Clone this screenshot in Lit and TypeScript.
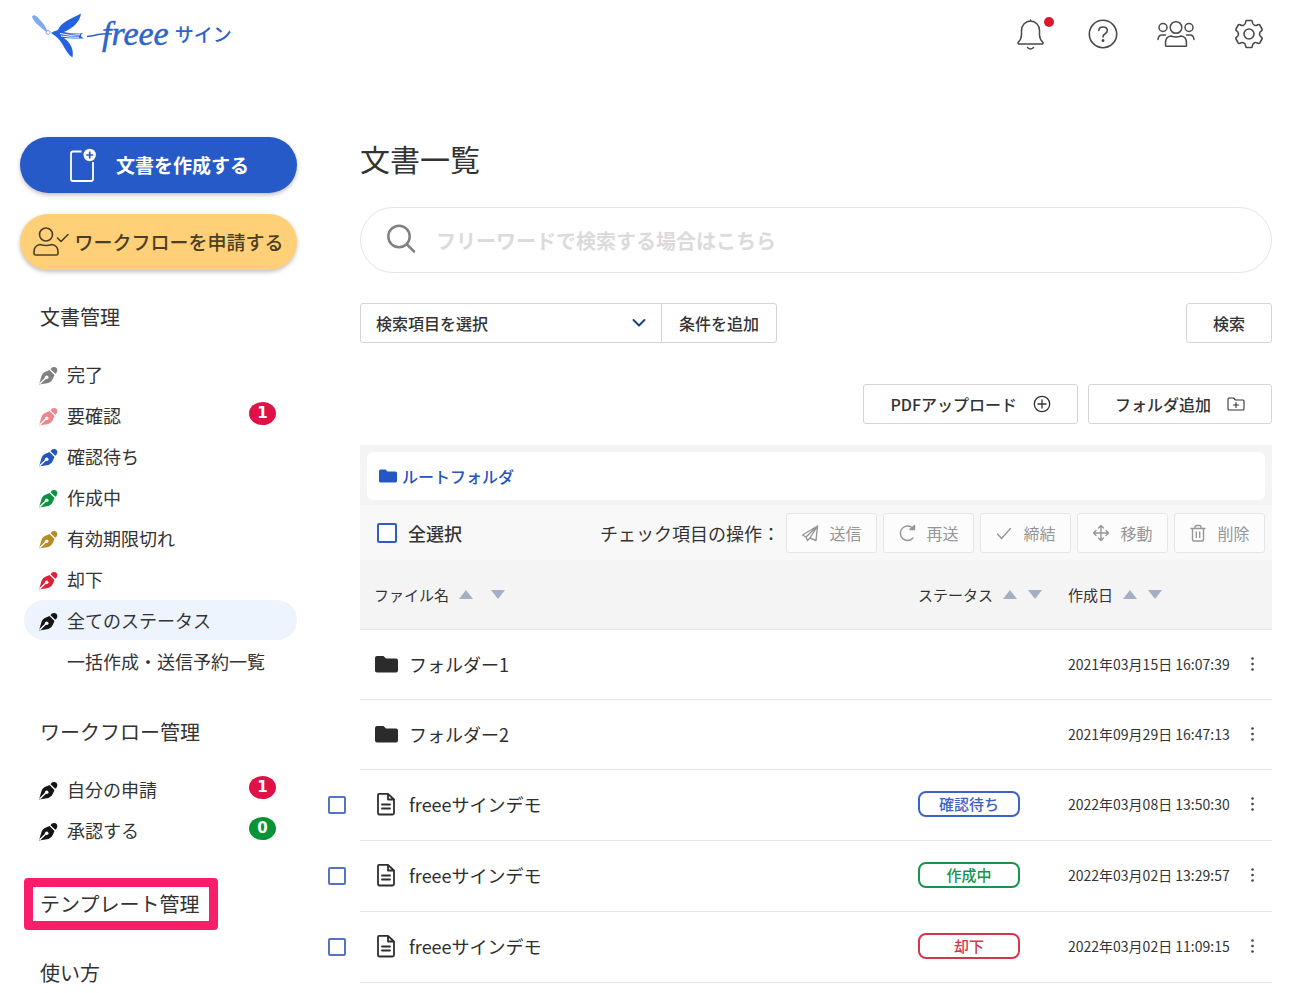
import { LitElement, html, css, svg, nothing } from "lit";
import { customElement, property } from "lit/decorators.js";
import { classMap } from "lit/directives/class-map.js";

type Badge = { count: number; tone: "alert" | "ok" };
type NavItem = { label: string; tone?: string; badge?: Badge; current?: boolean };
type Row = { kind: "folder" | "doc"; name: string; status?: string; tone?: string; date: string };

const STATUS_ITEMS: NavItem[] = [
  { label: "完了", tone: "gray" },
  { label: "要確認", tone: "pink", badge: { count: 1, tone: "alert" } },
  { label: "確認待ち", tone: "blue" },
  { label: "作成中", tone: "green" },
  { label: "有効期限切れ", tone: "gold" },
  { label: "却下", tone: "red" },
  { label: "全てのステータス", tone: "black", current: true },
  { label: "一括作成・送信予約一覧" },
];

const WORKFLOW_ITEMS: NavItem[] = [
  { label: "自分の申請", tone: "black", badge: { count: 1, tone: "alert" } },
  { label: "承認する", tone: "black", badge: { count: 0, tone: "ok" } },
];

const ROWS: Row[] = [
  { kind: "folder", name: "フォルダー1", date: "2021年03月15日 16:07:39" },
  { kind: "folder", name: "フォルダー2", date: "2021年09月29日 16:47:13" },
  { kind: "doc", name: "freeeサインデモ", status: "確認待ち", tone: "blue", date: "2022年03月08日 13:50:30" },
  { kind: "doc", name: "freeeサインデモ", status: "作成中", tone: "green", date: "2022年03月02日 13:29:57" },
  { kind: "doc", name: "freeeサインデモ", status: "却下", tone: "red", date: "2022年03月02日 11:09:15" },
];

const shared = css`
  * { box-sizing: border-box; }
  button, input, select {
    font: inherit;
    color: inherit;
    margin: 0;
  }
  button { cursor: pointer; }
  a { color: inherit; text-decoration: none; }
  svg { display: block; flex: none; }
  ul { list-style: none; margin: 0; padding: 0; }
  h1, h2 { margin: 0; font-weight: 400; }
  .line { fill: none; stroke: currentColor; stroke-linecap: round; stroke-linejoin: round; }
`;

const bell = svg`<path d="M4.500 26 Q2.500 26 3 24.500 C5 22.500 6.500 20.500 6.500 17 V12.500 A9 9.500 0 0 1 24.500 12.500 V17 C24.500 20.500 26 22.500 28 24.500 Q28.500 26 26.500 26 Z M12.500 29.500 Q15.500 32.500 18.500 29.500"/><path d="M15.500 3 V2"/>`;
const actions = [
  { label: "送信", icon: svg`<path d="M16.500 2 1.500 11 5 13 Z M16.500 2 15 16.500 9 14 6.500 16.500 5 13 M16.500 2 9 14"/>` },
  { label: "再送", icon: svg`<path d="M14.500 4 A7.200 7.200 0 1 0 15 14"/><path d="M12 5.500 H16.500 V1.500 Z" fill="currentColor"/>` },
  { label: "締結", icon: svg`<path d="M2.500 10 6.500 14.500 15.500 4.500"/>` },
  { label: "移動", icon: svg`<path d="M9 1.500V16.500M1.500 9H16.500M6.500 4 9 1.500 11.500 4M6.500 14 9 16.500 11.500 14M4 6.500 1.500 9 4 11.500M14 6.500 16.500 9 14 11.500"/>` },
  { label: "削除", icon: svg`<path d="M2 4.500H16M6 4.500 V3 Q6 1.500 7.500 1.500 H10.500 Q12 1.500 12 3 V4.500M3.500 4.500V15.500Q3.500 17 5 17H13Q14.500 17 14.500 15.500V4.500M7.300 8V13.500M10.700 8V13.500"/>` },
];

@customElement("app-header")
class AppHeader extends LitElement {
  static styles = [shared, css`
    :host {
      display: flex;
      justify-content: space-between;
      align-items: center;
      height: 68px;
      padding: 0 30px;
      color: #4a4a4a;
    }
    .logo { display: flex; align-items: center; color: #2f63cc; }
    .bird { margin-right: -12px; }
    .word { font: italic 34px/44px "Liberation Serif", serif; -webkit-text-stroke: 0.5px currentColor; }
    .sub { font-size: 19px; font-weight: 500; line-height: 28px; margin-left: 6px; }
    nav { display: flex; gap: 33px; }
    .tool {
      position: relative;
      width: 40px;
      height: 40px;
      padding: 0;
      border: 0;
      background: none;
      display: grid;
      place-items: center;
    }
    .dot {
      position: absolute;
      top: 3px;
      right: -4px;
      width: 10px;
      height: 10px;
      border-radius: 50%;
      background: #d9182d;
    }
  `];

  render() {
    return html`
      <a class="logo" href="#" aria-label="freee サイン">
        <svg class="bird" width="84" height="52" viewBox="30 8 84 52">
          <path d="M32 16.500 Q34 14 37.500 17 L44 24.500 L47.500 31 L45.500 31.500 L38 25 Q32.500 20 32 16.500 Z" fill="#7fa9f2" />
          <circle cx="48" cy="32.500" r="2" fill="none" stroke="#7fa9f2" />
          <path d="M51 33 Q54 31 58 30 C61 22 71 19 81 13.500 C80 22 73 28 64 32 Q74 34.500 83.500 33 Q78 35.500 84 38.500 Q73 38.500 64 38 C71 43 74 50 72.500 57.500 C65 53 64 42 54 35 Z" fill="#2463e0" />
          <path d="M60 33.500 Q70 36.500 80 34.700 M61 36 Q70 37.500 79 37.200" stroke="#fff" stroke-width="1" fill="none" />
          <path d="M87 36.500 Q93 36 98 34.500 Q104 33.500 112 34" stroke="currentColor" stroke-width="1.500" fill="none" />
        </svg>
        <span class="word">freee</span>
        <span class="sub">サイン</span>
      </a>
      <nav aria-label="ツール">
        <button class="tool" aria-label="通知">
          <svg class="line" width="31" height="32" viewBox="0 0 31 32" stroke-width="1.500">${bell}</svg>
          <span class="dot"></span>
        </button>
        <button class="tool" aria-label="ヘルプ">
          <svg class="line" width="32" height="32" viewBox="0 0 32 32" stroke-width="1.600">
            <circle cx="16" cy="16" r="13.700" />
            <path d="M11.800 12.500 Q12 9 16 9 Q20.300 9 20.300 12.500 Q20.300 14.800 17.800 16 Q16 17 16 19" />
            <circle cx="16" cy="22.500" r=".7" fill="currentColor" />
          </svg>
        </button>
        <button class="tool" aria-label="メンバー">
          <svg class="line" width="38" height="32" viewBox="0 0 38 32" stroke-width="1.500">
            <circle cx="19" cy="9.500" r="5.800" /><circle cx="6" cy="9.500" r="4" /><circle cx="32" cy="9.500" r="4" />
            <path d="M8.500 27.500 V25 Q8.500 18.500 14 18 Q19 20 24 18 Q29.500 18.500 29.500 25 V27.500 Q29.500 28.300 28.500 28.300 H9.500 Q8.500 28.300 8.500 27.500 Z M1 21.500 Q1.500 17 5 17 H8.500 M37 21.500 Q36.500 17 33 17 H29.500" />
          </svg>
        </button>
        <button class="tool" aria-label="設定">
          <svg class="line" width="32" height="32" viewBox="0 0 32 32" stroke-width="1.600">
            <circle cx="16" cy="16" r="5" />
            <path d="M13.500 2.500 H18.500 Q19.300 2.500 19.300 4 Q19.500 6.500 21.500 7.300 Q23 7.800 25 6.700 Q26.300 6.200 27 7.300 L29 11 Q29.500 12 28.500 12.800 Q26.500 14 26.500 16 Q26.500 18 28.500 19.200 Q29.500 20 29 21 L27 24.700 Q26.300 25.800 25 25.300 Q23 24.200 21.500 24.700 Q19.500 25.500 19.300 28 Q19.300 29.500 18.500 29.500 H13.500 Q12.700 29.500 12.700 28 Q12.500 25.500 10.500 24.700 Q9 24.200 7 25.300 Q5.700 25.800 5 24.700 L3 21 Q2.500 20 3.500 19.200 Q5.500 18 5.500 16 Q5.500 14 3.500 12.800 Q2.500 12 3 11 L5 7.300 Q5.700 6.200 7 6.700 Q9 7.800 10.500 7.300 Q12.500 6.500 12.700 4 Q12.700 2.500 13.500 2.500 Z" />
          </svg>
        </button>
      </nav>
    `;
  }
}

@customElement("app-sidebar")
class AppSidebar extends LitElement {
  static styles = [shared, css`
    :host { display: block; }
    .cta {
      display: flex;
      align-items: center;
      width: 100%;
      height: 56px;
      border: 0;
      border-radius: 28px;
      font-size: 19px;
      line-height: 28px;
      white-space: nowrap;
      box-shadow: 0 2px 4px rgba(0, 0, 0, 0.25);
    }
    .create { justify-content: center; gap: 20px; padding: 0 4px; background: #265ac8; color: #fff; font-weight: 700; }
    .apply { justify-content: center; gap: 5px; padding: 0; margin-top: 21px; background: #ffd078; color: #4a3f26; font-weight: 500; }
    section { margin-top: 32px; }
    section + section { margin-top: 36px; }
    h2 { font-size: 20px; line-height: 30px; padding-left: 20px; }
    ul { display: grid; gap: 1px; margin-top: 22px; padding-left: 4px; }
    .item {
      display: flex;
      align-items: center;
      height: 40px;
      padding: 0 21px 0 14px;
      border-radius: 20px;
      font-size: 18px;
      line-height: 26px;
      white-space: nowrap;
    }
    .current { background: #edf4fe; }
    .pen { width: 20px; margin-right: 9px; padding-top: 4px; }
    .label { flex: 1; }
    .badge {
      width: 27px;
      height: 23px;
      margin-bottom: 4px;
      border-radius: 50%;
      color: #fff;
      font: 700 15px/23px "DejaVu Sans", sans-serif;
      text-align: center;
    }
    .alert { background: #df1247; }
    .ok { background: #0a9236; }
    .gray { color: #808080; }
    .pink { color: #f0858b; }
    .blue { color: #2655bd; }
    .green { color: #0b9440; }
    .gold { color: #b78b25; }
    .red { color: #dc2138; }
    .black { color: #151515; }
    .links { display: grid; justify-items: start; gap: 28px; margin-top: 28px; font-size: 20px; line-height: 30px; }
    .link { padding-left: 20px; }
    .marked { margin-left: 4px; padding: 2px 10px 2px 7px; border: 9px solid #f91d6a; border-radius: 4px; }
  `];

  private item(it: NavItem) {
    return html`<li>
      <a href="#" class=${classMap({ item: true, current: !!it.current })} aria-current=${it.current ? "page" : nothing}>
        <span class="pen ${it.tone ?? ""}">
          ${it.tone
            ? html`<svg width="20" height="20" viewBox="0 0 20 20">
                <path fill="currentColor" d="M1 18.500 L3.500 10 Q4.500 6.500 8 5.500 L11.500 4 L16.500 9 L15 12.500 Q14 15.500 10.500 17 Z" />
                <path fill="currentColor" d="M12.500 3.300 Q13.500 1 16 1 Q19.500 1.200 19.300 4.500 Q19 6.800 17.300 7.800 Z" />
                <path d="M1.500 18 L8 11.700" stroke="#fff" stroke-width="1.400" />
                <circle cx="8.700" cy="11.200" r="1.800" fill="#fff" />
              </svg>`
            : nothing}
        </span>
        <span class="label">${it.label}</span>
        ${it.badge ? html`<span class="badge ${it.badge.tone}">${it.badge.count}</span>` : nothing}
      </a>
    </li>`;
  }

  render() {
    return html`
      <button class="cta create">
        <svg width="28" height="36" viewBox="0 0 28 36">
          <path d="M13.500 4.500 H5 Q3 4.500 3 6.500 V32 Q3 34 5 34 H23 Q25 34 25 32 V15" fill="none" stroke="#fff" stroke-width="1.800" />
          <circle cx="21.700" cy="8" r="6.200" fill="#fff" />
          <path d="M21.700 4.500 V11.500 M18.200 8 H25.200" stroke="#265ac8" stroke-width="1.700" />
        </svg>
        文書を作成する
      </button>
      <button class="cta apply">
        <svg class="line" width="36" height="32" viewBox="0 0 36 32" stroke-width="1.600">
          <circle cx="13" cy="8.500" r="6.500" />
          <path d="M1 27.500 V26 Q1 19.500 7 18.500 Q13 20.500 19 18.500 Q25 19.500 25 26 V27.500 Q25 29 23.500 29 H2.500 Q1 29 1 27.500 Z M24.500 12 L28 15.500 L35 8.500" />
        </svg>
        ワークフローを申請する
      </button>
      <section>
        <h2>文書管理</h2>
        <ul>${STATUS_ITEMS.map((i) => this.item(i))}</ul>
      </section>
      <section>
        <h2>ワークフロー管理</h2>
        <ul>${WORKFLOW_ITEMS.map((i) => this.item(i))}</ul>
      </section>
      <div class="links">
        <a class="marked" href="#">テンプレート管理</a>
        <a class="link" href="#">使い方</a>
      </div>
    `;
  }
}

@customElement("sort-label")
class SortLabel extends LitElement {
  @property() label = "";
  static styles = [shared, css`
    :host { display: flex; align-items: center; gap: 10px; white-space: nowrap; }
    .arrows { display: flex; gap: var(--arrow-gap, 11px); }
    button { display: block; padding: 0; border: 0; background: none; color: #a3afc2; }
  `];
  render() {
    return html`<span>${this.label}</span>
      <span class="arrows">
        <button aria-label="${this.label} 昇順"><svg width="14" height="12" viewBox="0 0 14 12"><path d="M0 10 L7 1 L14 10Z" fill="currentColor" /></svg></button>
        <button aria-label="${this.label} 降順"><svg width="14" height="12" viewBox="0 0 14 12"><path d="M0 1 L7 10 L14 1Z" fill="currentColor" /></svg></button>
      </span>`;
  }
}

@customElement("document-list")
class DocumentList extends LitElement {
  static styles = [shared, css`
    :host { display: block; }
    h1 { font-size: 30px; line-height: 42px; }
    .search {
      display: flex;
      align-items: center;
      gap: 20px;
      height: 66px;
      margin-top: 28px;
      padding: 0 25px;
      border: 1px solid #e4e4e4;
      border-radius: 33px;
      color: #808080;
    }
    .search svg { margin-bottom: 2px; }
    .search input {
      flex: 1;
      min-width: 0;
      height: 48px;
      padding: 0;
      border: 0;
      outline: 0;
      background: none;
      font-size: 20px;
      font-weight: 700;
    }
    .search input::placeholder { color: #dcdada; opacity: 1; }
    .btn {
      display: flex;
      align-items: center;
      justify-content: center;
      height: 40px;
      padding: 0 26px;
      border: 1px solid #d4d4d4;
      border-radius: 3px;
      background: #fff;
      font-size: 16px;
      line-height: 24px;
      font-weight: 500;
      white-space: nowrap;
    }
    .filter { display: flex; margin-top: 30px; }
    .pick { display: grid; align-items: center; width: 302px; }
    .pick > * { grid-area: 1 / 1; }
    .pick select {
      appearance: none;
      width: 100%;
      height: 40px;
      padding: 0 40px 0 15px;
      border: 1px solid #d4d4d4;
      border-radius: 3px 0 0 3px;
      background: #fff;
      font-size: 16px;
      font-weight: 500;
    }
    .pick svg { justify-self: end; margin-right: 16px; color: #17447e; pointer-events: none; }
    .add { padding: 0 17px; margin-left: -1px; border-radius: 0 3px 3px 0; }
    .run { margin-left: auto; }
    .actions { display: flex; justify-content: flex-end; gap: 10px; margin-top: 41px; }
    .actions .btn { gap: 16px; }
    .panel { margin-top: 21px; padding-top: 7px; background: #f5f4f5; }
    .crumb {
      display: flex;
      align-items: center;
      height: 48px;
      margin: 0 7px 5px;
      padding: 0 12px;
      border-radius: 6px;
      background: #fff;
      color: #2655bd;
      font-size: 16px;
      line-height: 24px;
      font-weight: 500;
    }
    .crumb a { display: flex; align-items: center; gap: 5px; }
    .bulk {
      display: flex;
      align-items: center;
      gap: 6px;
      padding: 8px 7px 7px 17px;
      background: #f8f8f8;
      font-size: 18px;
      line-height: 26px;
      white-space: nowrap;
    }
    .all { display: flex; align-items: center; gap: 11px; margin-right: auto; font-weight: 500; }
    .bulk .btn {
      gap: 10px;
      width: 91px;
      padding: 0;
      border-color: #e6e6e6;
      background: #fcfcfc;
      color: #969696;
      font-weight: 400;
    }
    .box {
      appearance: none;
      display: block;
      width: 18px;
      height: 18px;
      border: 2px solid #5474c0;
      border-radius: 2px;
      background: #fff;
    }
    .all .box { width: 20px; height: 20px; border-color: #2f5cc0; }
    .box:checked { background: #2655bd; }
    table {
      width: calc(100% + 32px);
      margin-left: -32px;
      border-collapse: separate;
      border-spacing: 0;
      table-layout: fixed;
    }
    th, td { padding: 0; text-align: left; font-weight: 400; border-bottom: 1px solid #e6e6e6; }
    th { height: 70px; background: #f5f4f5; font-size: 15px; line-height: 22px; }
    th:first-child, td:first-child { background: none; border: 0; }
    .c-check { width: 32px; }
    .c-status { width: 150px; }
    .c-date { width: 172px; }
    .c-menu { width: 32px; }
    .wide { --arrow-gap: 18px; padding-left: 14px; }
    td { padding-bottom: 2px; font-size: 14px; line-height: 20px; white-space: nowrap; }
    .folder td { height: 70px; }
    .doc td { height: 71px; }
    .name { display: flex; align-items: center; gap: 10px; padding-left: 14px; font-size: 18px; line-height: 26px; color: #2e2e2e; }
    .tag {
      display: block;
      width: 102px;
      height: 26px;
      border: 2px solid currentColor;
      border-radius: 8px;
      font-size: 15px;
      line-height: 22px;
      font-weight: 500;
      text-align: center;
    }
    .blue { color: #3c62c8; }
    .green { color: #16964a; }
    .red { color: #d5364a; }
    .more { display: block; width: 24px; height: 24px; padding: 0; border: 0; background: none; }
  `];

  private icon(kind: string) {
    return kind === "folder"
      ? html`<svg width="25" height="20" viewBox="0 0 25 20"><path fill="#2b2b2b" d="M1 4 Q1 2 3 2 H9.500 L12 4.500 H22 Q24 4.500 24 6.500 V16.500 Q24 18.500 22 18.500 H3 Q1 18.500 1 16.500Z" /></svg>`
      : html`<svg class="line" width="25" height="24" viewBox="0 0 25 24" stroke-width="1.800">
          <path d="M5 1.800 H14 L20 7.500 V21 Q20 22.500 18.500 22.500 H5.500 Q4 22.500 4 21 V3 Q4 1.800 5 1.800Z M14 2 V7.500 H20 M8 12.500 H16 M8 16.500 H16" />
        </svg>`;
  }

  render() {
    return html`
      <h1>文書一覧</h1>
      <label class="search">
        <svg class="line" width="30" height="30" viewBox="0 0 30 30" stroke-width="2.500">
          <circle cx="13" cy="12.500" r="10.700" /><path d="M21 20.500 L28 27.500" />
        </svg>
        <input type="search" aria-label="フリーワード検索" placeholder="フリーワードで検索する場合はこちら" />
      </label>
      <div class="filter">
        <div class="pick">
          <select aria-label="検索項目"><option>検索項目を選択</option></select>
          <svg class="line" width="14" height="10" viewBox="0 0 14 10" stroke-width="2"><path d="M1.500 2 L7 7.500 L12.500 2" /></svg>
        </div>
        <button class="btn add">条件を追加</button>
        <button class="btn run">検索</button>
      </div>
      <div class="actions">
        <button class="btn">PDFアップロード
          <svg class="line" width="18" height="18" viewBox="0 0 18 18" stroke-width="1.300"><circle cx="9" cy="9" r="7.700" /><path d="M9 5V13M5 9H13" /></svg>
        </button>
        <button class="btn">フォルダ追加
          <svg class="line" width="18" height="16" viewBox="0 0 18 16" stroke-width="1.100"><path d="M1 13V3Q1 2 2 2H6.500L8.500 4H16Q17 4 17 5V13Q17 14 16 14H2Q1 14 1 13ZM9 6.500V11.500M6.500 9H11.500" /></svg>
        </button>
      </div>
      <div class="panel">
        <nav class="crumb" aria-label="フォルダ">
          <a href="#">
            <svg width="18" height="16" viewBox="0 0 18 16"><path fill="#2456c4" d="M0 3 Q0 1.500 1.500 1.500 H6.500 L8.500 3.500 H16.500 Q18 3.500 18 5 V13 Q18 14.500 16.500 14.500 H1.500 Q0 14.500 0 13Z" /></svg>
            ルートフォルダ
          </a>
        </nav>
        <div class="bulk">
          <label class="all"><input class="box" type="checkbox" />全選択</label>
          <span>チェック項目の操作：</span>
          ${actions.map((a) => html`<button class="btn">
            <svg class="line" width="18" height="18" viewBox="0 0 18 18" stroke-width="1.400">${a.icon}</svg>${a.label}
          </button>`)}
        </div>
      </div>
      <table>
        <colgroup><col class="c-check" /><col /><col class="c-status" /><col class="c-date" /><col class="c-menu" /></colgroup>
        <thead>
          <tr>
            <th></th>
            <th class="wide"><sort-label label="ファイル名"></sort-label></th>
            <th><sort-label label="ステータス"></sort-label></th>
            <th><sort-label label="作成日"></sort-label></th>
            <th></th>
          </tr>
        </thead>
        <tbody>
          ${ROWS.map((r) => html`<tr class=${r.kind}>
            <td>${r.kind === "doc" ? html`<input class="box" type="checkbox" aria-label="${r.name} ${r.date}" />` : nothing}</td>
            <td><a class="name" href="#">${this.icon(r.kind)}${r.name}</a></td>
            <td>${r.status ? html`<span class="tag ${r.tone}">${r.status}</span>` : nothing}</td>
            <td>${r.date}</td>
            <td><button class="more" aria-label="メニュー">
              <svg width="24" height="20" viewBox="0 0 24 20" fill="#444"><circle cx="12.500" cy="4.500" r="1.300" /><circle cx="12.500" cy="10" r="1.300" /><circle cx="12.500" cy="15.500" r="1.300" /></svg>
            </button></td>
          </tr>`)}
        </tbody>
      </table>
    `;
  }
}

@customElement("app-root")
class AppRoot extends LitElement {
  static styles = css`
    :host {
      display: block;
      background: #fff;
      color: #333;
      font-family: "Noto Sans CJK JP", "Noto Sans", sans-serif;
    }
    .body { display: flex; align-items: flex-start; gap: 63px; padding: 69px 27px 0 20px; }
    aside { flex: none; width: 277px; }
    main { flex: 1; min-width: 0; }
  `;
  render() {
    return html`
      <header><app-header></app-header></header>
      <div class="body">
        <aside><app-sidebar></app-sidebar></aside>
        <main><document-list></document-list></main>
      </div>
    `;
  }
}
